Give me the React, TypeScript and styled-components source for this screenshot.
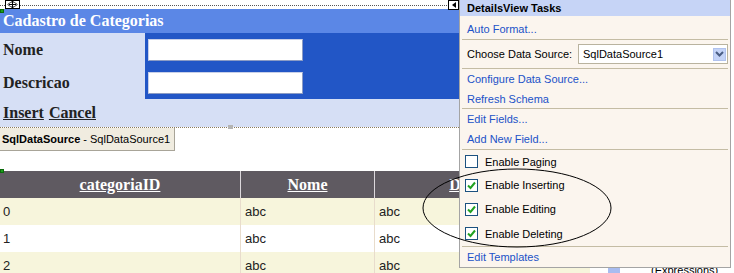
import styled, { createGlobalStyle } from "styled-components"

const GlobalStyle = createGlobalStyle`
  html, body {
    margin: 0;
    padding: 0;
    background: #fff;
  }
  body {
    width: 734px;
    height: 273px;
    overflow: hidden;
  }
`

const Surface = styled.div`
  position: relative;
  width: 734px;
  height: 273px;
  overflow: hidden;
  box-sizing: border-box;
  padding-top: 5px;
  font-family: "Liberation Sans", Arial, sans-serif;
  font-size: 11px;
  color: #000;
`

const DetailsFrame = styled.div`
  width: 459px;
  border-top: 1px dotted #555;
  border-bottom: 1px dotted #8c7b5c;
  padding-top: 3px;
`

const Caption = styled.div`
  height: 24px;
  background: #5b87e6;
  color: #fff;
  font: bold 16px "Liberation Serif", "Times New Roman", serif;
  padding-left: 3px;
  display: flex;
  align-items: center;
`

const FieldRow = styled.div`
  display: grid;
  grid-template-columns: 145px 1fr;
  height: 33px;
`

const LabelCell = styled.div`
  background: #d6dff5;
  color: #222;
  font: bold 16px "Liberation Serif", "Times New Roman", serif;
  padding-left: 3px;
  display: flex;
  align-items: center;
`

const ValueCell = styled.div`
  background: #2256c6;
  padding-left: 3px;
  display: flex;
  align-items: center;
`

const TextBox = styled.div`
  width: 155px;
  height: 22px;
  box-sizing: border-box;
  background: #fff;
  border: 1px solid #8c9cc4;
  border-top-color: #c8d0e8;
  border-left-color: #c8d0e8;
`

const CommandRow = styled.div`
  height: 28px;
  background: #d6dff5;
  padding-left: 3px;
  display: flex;
  align-items: center;
  gap: 5px;
`

const CommandLink = styled.span`
  color: #222;
  font: bold 16px "Liberation Serif", "Times New Roman", serif;
  text-decoration: underline;
`

const SourceChip = styled.div`
  width: 175px;
  height: 23px;
  box-sizing: border-box;
  background: #f0ece0;
  border-right: 1px solid #a8a498;
  border-bottom: 1px solid #a8a498;
  padding-left: 2px;
  display: flex;
  align-items: center;
  white-space: pre;
  > b {
    font-weight: bold;
  }
`

const Grid = styled.div`
  position: relative;
  margin-top: 20px;
  width: 590px;
  display: grid;
  grid-template-columns: 240px 134px 216px;
  grid-auto-rows: 27px;
`

const HeadCell = styled.div<{ $first?: boolean }>`
  background: #5f5a61;
  color: #fff;
  font: bold 16px "Liberation Serif", "Times New Roman", serif;
  text-decoration: underline;
  display: flex;
  align-items: center;
  justify-content: center;
  border-left: ${(p) => (p.$first ? "none" : "1px solid #dcd8dc")};
`

const BodyCell = styled.div<{ $alt?: boolean; $first?: boolean }>`
  background: ${(p) => (p.$alt ? "#f7f5dc" : "#fff")};
  color: #222;
  font-size: 13px;
  display: flex;
  align-items: center;
  padding-left: ${(p) => (p.$first ? "3px" : "4px")};
  border-left: ${(p) => (p.$first ? "none" : "1px solid #e8dccc")};
`

const GreenMark = styled.span<{ $top: number }>`
  position: absolute;
  left: 0;
  top: ${(p) => p.$top}px;
  width: 4px;
  height: 4px;
  background: #1c9c1c;
  border: 1px solid #0a6a0a;
  box-sizing: border-box;
`

const MoveHandle = styled.svg`
  position: absolute;
  left: 5px;
  top: 0;
`

const ResizeGrip = styled.span`
  position: absolute;
  left: 228px;
  top: 125px;
  width: 5px;
  height: 4px;
  background: #b4b4b4;
`

const SmartTag = styled.div`
  position: absolute;
  left: 448px;
  top: 0;
  width: 11px;
  height: 10px;
  box-sizing: border-box;
  background: #fff;
  border: 1px solid #000;
  display: flex;
  align-items: center;
  justify-content: center;
  &::before {
    content: "";
    border-top: 3px solid transparent;
    border-bottom: 3px solid transparent;
    border-right: 4px solid #000;
  }
`

const TaskPanel = styled.div`
  position: absolute;
  left: 459px;
  top: 0;
  width: 272px;
  height: 268px;
  box-sizing: border-box;
  background: #fbf5ee;
  border: 1px solid #a4a4a4;
  border-top: none;
  display: flex;
  flex-direction: column;
  z-index: 2;
`

const PanelHeader = styled.div`
  height: 16px;
  flex: none;
  background: #c6d4f6;
  font-weight: bold;
  padding-left: 7px;
  display: flex;
  align-items: center;
`

const PanelRow = styled.div<{ $h: number; $drop?: number }>`
  height: ${(p) => p.$h}px;
  flex: none;
  box-sizing: border-box;
  padding-left: 7px;
  padding-top: ${(p) => p.$drop ?? 0}px;
  display: flex;
  align-items: center;
  gap: 5px;
`

const TaskLink = styled.span`
  color: #2152c8;
`

const Divider = styled.div`
  height: 1px;
  flex: none;
  margin: 0 2px;
  background: #c4bca4;
`

const Select = styled.div`
  margin-left: auto;
  margin-right: 2px;
  width: 150px;
  height: 20px;
  box-sizing: border-box;
  background: #fff;
  border: 1px solid #b9b39f;
  padding-left: 4px;
  display: flex;
  align-items: center;
  justify-content: space-between;
`

const SelectButton = styled.span`
  width: 13px;
  height: 13px;
  margin-right: 1px;
  box-sizing: border-box;
  background: #c4d3f7;
  border: 1px solid #b0c2ee;
  display: flex;
  align-items: center;
  justify-content: center;
`

const CheckBox = styled.span`
  width: 13px;
  height: 13px;
  margin-left: -2px;
  margin-right: 2px;
  box-sizing: border-box;
  background: #fff;
  border: 1px solid #1c5180;
  display: flex;
  align-items: center;
  justify-content: center;
`

const BackText = styled.span`
  position: absolute;
  left: 651px;
  top: 264px;
  font-size: 11px;
  z-index: 1;
`

const BackSwatch = styled.span`
  position: absolute;
  left: 608px;
  top: 266px;
  width: 12px;
  height: 8px;
  background: #a8bcf0;
  z-index: 1;
`

const Annotation = styled.svg`
  position: absolute;
  left: 421px;
  top: 167px;
  z-index: 3;
  pointer-events: none;
`

function Check({ on }: { on?: boolean }) {
  return (
    <CheckBox>
      {on && (
        <svg width="9" height="9" viewBox="0 0 9 9">
          <path d="M1 4.5 L3.5 7 L8 1.5" stroke="#21a121" strokeWidth="2" fill="none" />
        </svg>
      )}
    </CheckBox>
  )
}

const rows = [
  ["0", "abc", "abc"],
  ["1", "abc", "abc"],
  ["2", "abc", "abc"],
]

export default function App() {
  return (
    <>
      <GlobalStyle />
      <Surface>
        <DetailsFrame>
          <Caption>Cadastro de Categorias</Caption>
          <FieldRow>
            <LabelCell>Nome</LabelCell>
            <ValueCell>
              <TextBox />
            </ValueCell>
          </FieldRow>
          <FieldRow>
            <LabelCell>Descricao</LabelCell>
            <ValueCell>
              <TextBox />
            </ValueCell>
          </FieldRow>
          <CommandRow>
            <CommandLink>Insert</CommandLink>
            <CommandLink>Cancel</CommandLink>
          </CommandRow>
        </DetailsFrame>
        <SourceChip>
          <b>SqlDataSource</b> - SqlDataSource1
        </SourceChip>
        <Grid>
          <GreenMark $top={-2} />
          <HeadCell $first>categoriaID</HeadCell>
          <HeadCell>Nome</HeadCell>
          <HeadCell>Descricao</HeadCell>
          {rows.map((r, i) =>
            r.map((v, j) => (
              <BodyCell key={i + "-" + j} $alt={i % 2 === 0} $first={j === 0}>
                {v}
              </BodyCell>
            ))
          )}
        </Grid>

        <GreenMark $top={9} />
        <MoveHandle width="15" height="9" viewBox="0 0 15 9">
          <rect x="0.5" y="0.5" width="14" height="8" fill="#fff" stroke="#000" />
          <path d="M7.5 1 V8 M4 4.5 H11" stroke="#000" />
          <path d="M5.5 3 L7.5 1 L9.5 3 M5.5 6 L7.5 8 L9.5 6 M5 2.5 L3 4.5 L5 6.5 M10 2.5 L12 4.5 L10 6.5" stroke="#000" fill="none" />
        </MoveHandle>
        <ResizeGrip />
        <SmartTag />

        <BackSwatch />
        <BackText>(Expressions)</BackText>

        <TaskPanel>
          <PanelHeader>DetailsView Tasks</PanelHeader>
          <PanelRow $h={23} $drop={3}>
            <TaskLink>Auto Format...</TaskLink>
          </PanelRow>
          <Divider />
          <PanelRow $h={28}>
            Choose Data Source:
            <Select>
              SqlDataSource1
              <SelectButton>
                <svg width="9" height="6" viewBox="0 0 9 6">
                  <path d="M1 1 L4.5 4.5 L8 1" stroke="#4a5d84" strokeWidth="2" fill="none" />
                </svg>
              </SelectButton>
            </Select>
          </PanelRow>
          <Divider />
          <PanelRow $h={20}>
            <TaskLink>Configure Data Source...</TaskLink>
          </PanelRow>
          <PanelRow $h={19}>
            <TaskLink>Refresh Schema</TaskLink>
          </PanelRow>
          <Divider />
          <PanelRow $h={20}>
            <TaskLink>Edit Fields...</TaskLink>
          </PanelRow>
          <PanelRow $h={20}>
            <TaskLink>Add New Field...</TaskLink>
          </PanelRow>
          <Divider />
          <PanelRow $h={23}>
            <Check />
            Enable Paging
          </PanelRow>
          <PanelRow $h={24}>
            <Check on />
            Enable Inserting
          </PanelRow>
          <PanelRow $h={24}>
            <Check on />
            Enable Editing
          </PanelRow>
          <PanelRow $h={25}>
            <Check on />
            Enable Deleting
          </PanelRow>
          <Divider />
          <PanelRow $h={20}>
            <TaskLink>Edit Templates</TaskLink>
          </PanelRow>
        </TaskPanel>

        <Annotation width="192" height="82" viewBox="0 0 192 82">
          <ellipse cx="96" cy="41" rx="94" ry="39" fill="none" stroke="#000" strokeWidth="1" />
        </Annotation>
      </Surface>
    </>
  )
}
